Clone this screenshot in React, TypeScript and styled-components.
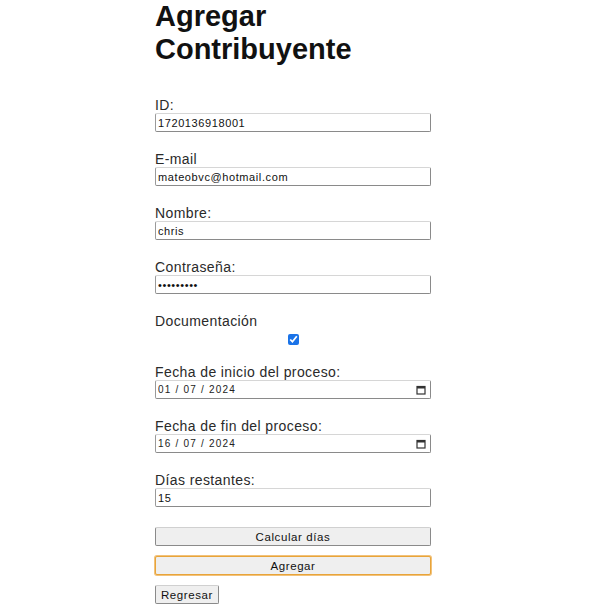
import React from "react";
import styled, { createGlobalStyle } from "styled-components";

const GlobalStyle = createGlobalStyle`
  body {
    margin: 0;
    background: #ffffff;
    font-family: "Liberation Sans", Arial, sans-serif;
    color: #1f1f1f;
  }
`;

const Page = styled.div`
  padding-left: 155px;
  width: 276px;
`;

const Title = styled.h1`
  margin: 0 0 32px;
  font-size: 29px;
  line-height: 33px;
  font-weight: bold;
  color: #111;
`;

const Form = styled.form`
  display: flex;
  flex-direction: column;
`;

const Field = styled.div`
  display: flex;
  flex-direction: column;
  margin-bottom: 20px;
`;

const Label = styled.label`
  font-size: 14px;
  line-height: 15px;
  height: 15px;
  letter-spacing: 0.4px;
  color: #2a2a2a;
`;

const boxBorder = `
  border: 1px solid #8a8a8a;
  border-top-color: #d6d6d6;
  border-left-color: #9a9a9a;
  border-radius: 2px;
`;

const TextInput = styled.input`
  box-sizing: border-box;
  width: 100%;
  height: 19px;
  padding: 0 2px;
  ${boxBorder}
  font-family: "Liberation Sans", Arial, sans-serif;
  font-size: 11px;
  letter-spacing: 0.6px;
  color: #111;
  background: #fff;
  outline: none;
`;

const DateBox = styled.div`
  box-sizing: border-box;
  display: flex;
  align-items: center;
  height: 19px;
  padding: 0 4px 0 2px;
  ${boxBorder}
`;

const DateText = styled.input`
  flex: 1;
  min-width: 0;
  border: none;
  padding: 0;
  outline: none;
  font-family: "Liberation Sans", Arial, sans-serif;
  font-size: 10px;
  letter-spacing: 1.2px;
  color: #222;
  background: transparent;
`;

const CheckRow = styled.div`
  display: flex;
  justify-content: center;
  padding-top: 5px;
  height: 11px;
`;

const Check = styled.input`
  margin: 0;
  width: 11px;
  height: 11px;
  accent-color: #1a73e8;
`;

const Button = styled.button<{ $full?: boolean; $focused?: boolean }>`
  box-sizing: border-box;
  width: ${(p) => (p.$full ? "100%" : "64px")};
  height: 19px;
  margin-bottom: 10px;
  padding: 0;
  background: #efefef;
  border: 1px solid ${(p) => (p.$focused ? "#e8a43a" : "#8a8a8a")};
  border-top-color: ${(p) => (p.$focused ? "#e8a43a" : "#d0d0d0")};
  border-radius: 2px;
  box-shadow: ${(p) => (p.$focused ? "0 0 0 1px #f2c27a" : "none")};
  font-family: "Liberation Sans", Arial, sans-serif;
  font-size: 11.5px;
  letter-spacing: 0.6px;
  color: #111;
`;

const Actions = styled.div`
  display: flex;
  flex-direction: column;
`;

function CalendarIcon() {
  return (
    <svg width="10" height="10" viewBox="0 0 10 10">
      <rect x="1" y="1.5" width="8" height="7.5" fill="none" stroke="#333" strokeWidth="1.2" />
      <rect x="1" y="1.5" width="8" height="2" fill="#333" />
    </svg>
  );
}

export default function App() {
  return (
    <Page>
      <GlobalStyle />
      <Title>Agregar Contribuyente</Title>
      <Form onSubmit={(e) => e.preventDefault()}>
        <Field>
          <Label>ID:</Label>
          <TextInput defaultValue="1720136918001" />
        </Field>
        <Field>
          <Label>E-mail</Label>
          <TextInput defaultValue="mateobvc@hotmail.com" />
        </Field>
        <Field>
          <Label>Nombre:</Label>
          <TextInput defaultValue="chris" />
        </Field>
        <Field>
          <Label>Contraseña:</Label>
          <TextInput type="password" defaultValue="123456789" />
        </Field>
        <Field>
          <Label>Documentación</Label>
          <CheckRow>
            <Check type="checkbox" defaultChecked />
          </CheckRow>
        </Field>
        <Field>
          <Label>Fecha de inicio del proceso:</Label>
          <DateBox>
            <DateText defaultValue="01 / 07 / 2024" />
            <CalendarIcon />
          </DateBox>
        </Field>
        <Field>
          <Label>Fecha de fin del proceso:</Label>
          <DateBox>
            <DateText defaultValue="16 / 07 / 2024" />
            <CalendarIcon />
          </DateBox>
        </Field>
        <Field>
          <Label>Días restantes:</Label>
          <TextInput defaultValue="15" />
        </Field>
        <Actions>
          <Button type="button" $full>
            Calcular días
          </Button>
          <Button type="submit" $full $focused>
            Agregar
          </Button>
          <Button type="button">Regresar</Button>
        </Actions>
      </Form>
    </Page>
  );
}
